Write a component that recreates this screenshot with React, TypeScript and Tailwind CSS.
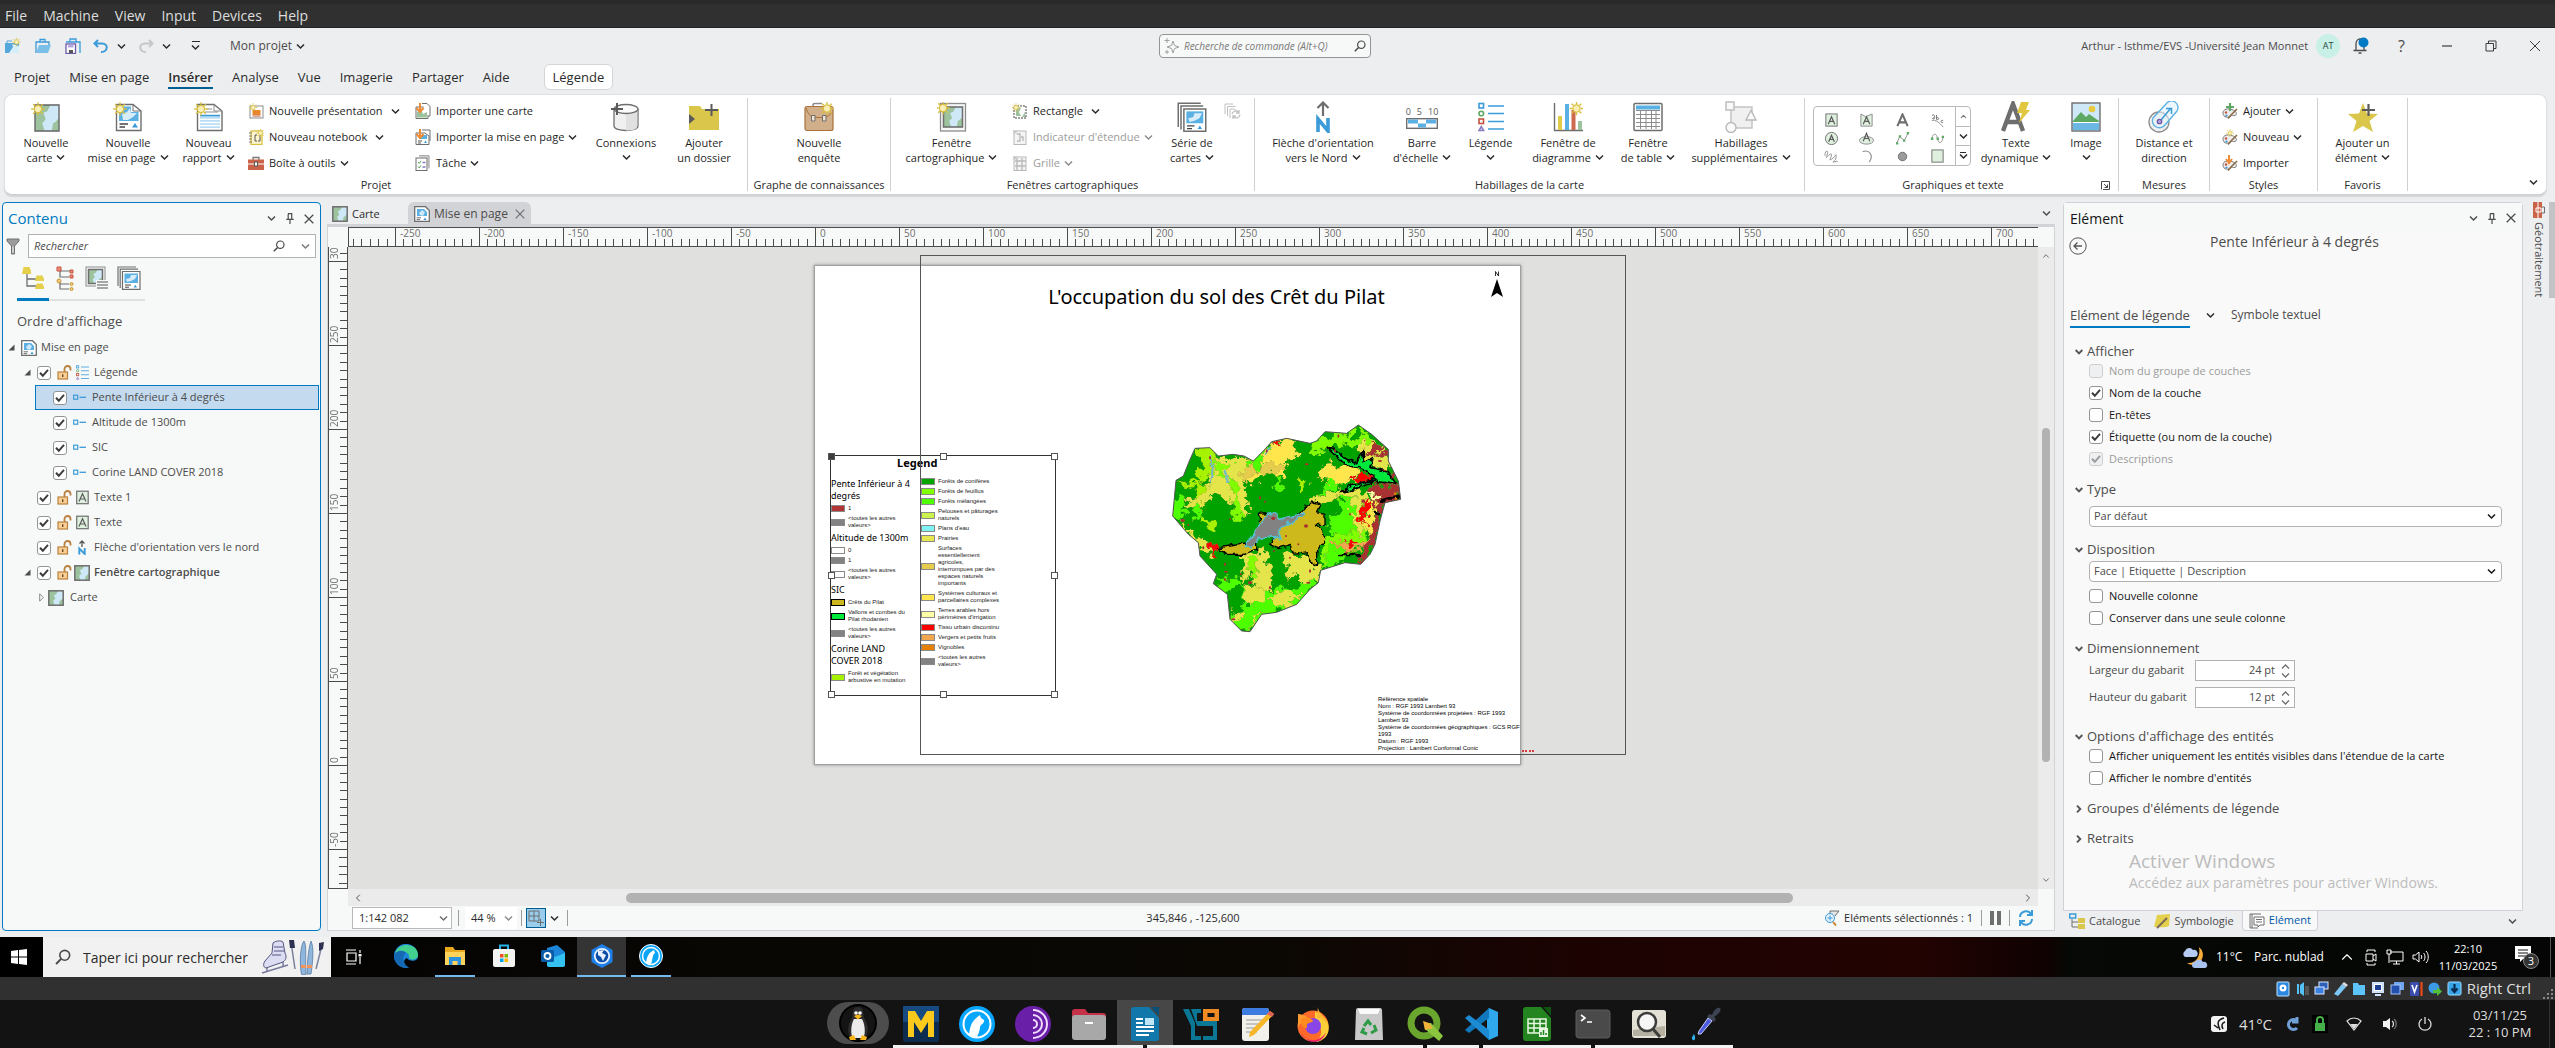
import React from 'react';
import { ChevronDown, ChevronUp, ChevronLeft, ChevronRight } from 'lucide-react';

/* ---------- shared drawing helpers ---------- */

const Svg = ({ w, h, vb, children, className = '' }: { w: number; h: number; vb?: string; children: React.ReactNode; className?: string }) => (
  <svg width={w} height={h} viewBox={vb ?? `0 0 ${w} ${h}`} fill="none" className={`shrink-0 ${className}`} aria-hidden="true">
    {children}
  </svg>
);

const Chev = ({ className = 'text-[#2b2b2b]' }: { className?: string }) => (
  <Svg w={9} h={7} className={className}>
    <path d="M1 1.5 4.5 5 8 1.5" stroke="currentColor" strokeWidth="1.5" />
  </Svg>
);

const Sun = ({ x, y, r = 4 }: { x: number; y: number; r?: number }) => (
  <g transform={`translate(${x} ${y})`}>
    {[0, 45, 90, 135, 180, 225, 270, 315].map((a) => (
      <path key={a} d={`M0 ${-r - 0.6}V${-r * 1.9}`} stroke="#d9bf3f" strokeWidth={r * 0.38} transform={`rotate(${a})`} />
    ))}
    <circle r={r} fill="#f8efb8" stroke="#d9bf3f" strokeWidth={r * 0.32} />
  </g>
);

const MapArt = ({ x, y, w, h }: { x: number; y: number; w: number; h: number }) => (
  <g transform={`translate(${x} ${y}) scale(${w / 20} ${h / 20})`}>
    <rect width="20" height="20" fill="#cfe8f7" />
    <path d="M0 0H13L10 5 7 6 9 11 6 14 8 20H0ZM20 10V20H14L15 14 17 13Z" fill="#9cc39d" />
    <rect width="20" height="20" stroke="#6e6e6e" strokeWidth={30 / w} fill="none" />
  </g>
);

const MapIcon = ({ s = 16 }: { s?: number }) => (
  <Svg w={s} h={s} vb="0 0 16 16">
    <MapArt x={0.8} y={0.8} w={14.4} h={14.4} />
  </Svg>
);

const PageIcon = ({ s = 16 }: { s?: number }) => (
  <Svg w={s} h={s} vb="0 0 16 16">
    <path d="M.7.7H11.5L15.3 4.5V15.3H.7Z" fill="#fff" stroke="#6e6e6e" strokeWidth="1.3" />
    <path d="M3 3H10L13 6V10H3Z" fill="#5aafe3" />
    <path d="M6 9 5 7 8 4 11 6 9 10Z" fill="#cfe8f7" />
    <path d="M2.6 11.8H7M2.6 13.6H6" stroke="#6e6e6e" />
    <path d="M9.5 14 11 11.6 12.5 14Z" fill="#3b9bd8" />
  </Svg>
);

const PagesStack = ({ s = 24 }: { s?: number }) => (
  <Svg w={s} h={s} vb="0 0 24 24">
    <path d="M1 20V1H19M3.2 22V3.2H21" stroke="#6e6e6e" strokeWidth="1.2" />
    <path d="M5.5 5.5H23V23.4H5.5Z" fill="#fff" stroke="#6e6e6e" strokeWidth="1.2" />
    <rect x="7.5" y="7.5" width="13.5" height="9.5" fill="#5aafe3" />
    <path d="M10 16 9 13 13 12 14 9 20 9 18 13 14 15Z" fill="#d8edfa" />
    <path d="M8 19H14M8 21.2H12" stroke="#444" />
    <path d="M16.5 21.5 18.3 18.7 20 21.5Z" fill="#3b9bd8" />
  </Svg>
);

const Funnel = () => (
  <Svg w={14} h={17}>
    <path d="M1 1H13V3L8.5 8V16H5.5V8L1 3Z" fill="#9c9c9c" stroke="#6e6e6e" />
    <path d="M6.5 8.5H7.5V15H6.5Z" fill="#fff" />
  </Svg>
);

const Lens = ({ s = 12, className = 'text-[#4c4c4c]' }: { s?: number; className?: string }) => (
  <Svg w={s} h={s} vb="0 0 12 12" className={className}>
    <circle cx="7.3" cy="4.7" r="3.7" stroke="currentColor" strokeWidth="1.2" />
    <path d="M4.6 7.4.8 11.3" stroke="currentColor" strokeWidth="1.5" />
  </Svg>
);

const Pin = () => (
  <Svg w={8} h={11}>
    <path d="M2 .7H6.3M2.2.7V6M5.7.7V6M.3 6.4H7.7M4 6.4V11" stroke="#4c4c4c" strokeWidth="1.2" />
  </Svg>
);

const LegendIcon = ({ w = 13, h = 15 }: { w?: number; h?: number }) => (
  <Svg w={w} h={h} vb="0 0 26 30">
    <rect x="1" y="1.5" width="4.5" height="4.5" stroke="#3b9bd8" strokeWidth="1.6" />
    <circle cx="3.3" cy="11.5" r="2.3" stroke="#5da862" strokeWidth="1.6" />
    <rect x="1" y="17" width="4.5" height="4.5" stroke="#c4523f" strokeWidth="1.6" />
    <path d="M1 28.5 3.3 24.5 5.6 28.5Z" stroke="#8c7cc0" strokeWidth="1.6" />
    <path d="M10 4H26M10 11.5H26M10 19.5H26M10 27H26" stroke="#3b9bd8" strokeWidth="1.6" />
  </Svg>
);

const LayerItemIcon = () => (
  <Svg w={13} h={7}>
    <rect x=".7" y="1.2" width="4" height="4" stroke="#3b9bd8" strokeWidth="1.2" />
    <path d="M6.5 3.3H13" stroke="#3b9bd8" strokeWidth="1.3" />
  </Svg>
);

const LockIcon = () => (
  <Svg w={15} h={15}>
    <path d="M7.5 7V4a3 3 0 0 1 6 0V5.500" stroke="#b9803f" strokeWidth="1.8" />
    <rect x="1" y="7" width="9.5" height="7" fill="#f9cf96" stroke="#b9803f" strokeWidth="1.2" />
    <path d="M5.7 9.2V12" stroke="#6b4520" strokeWidth="1.4" />
  </Svg>
);

const TextBoxIcon = () => (
  <Svg w={13} h={15}>
    <rect x=".7" y="1.2" width="11.5" height="12.5" fill="#dff0df" stroke="#6e6e6e" strokeWidth="1.2" />
    <path d="M3 11.5 6.5 3.8 10 11.5M4.3 9H8.7" stroke="#5a5a5a" strokeWidth="1.2" />
  </Svg>
);

const NorthIcon = () => (
  <Svg w={8} h={15}>
    <path d="M4 7V1M1.5 3.5 4 1 6.5 3.5" stroke="#555" strokeWidth="1.3" />
    <path d="M1.3 14.5V8.5L6.7 14V8" stroke="#3b9bd8" strokeWidth="1.9" />
  </Svg>
);

/* ---------- form parts ---------- */

const Check = ({ id, on = false, disabled = false }: { id: string; on?: boolean; disabled?: boolean }) => (
  <span className="relative inline-flex size-3.5 shrink-0">
    <input
      id={id}
      type="checkbox"
      defaultChecked={on}
      disabled={disabled}
      className="peer size-3.5 appearance-none rounded-[3px] border border-[#949494] bg-white disabled:border-[#cfcfcf] disabled:bg-[#eeeff0]"
    />
    <svg viewBox="0 0 14 14" className="pointer-events-none absolute inset-0 hidden size-3.5 text-[#3c3c3c] peer-checked:block peer-disabled:text-[#9c9c9c]" fill="none" aria-hidden="true">
      <path d="M3 6.8 5.8 9.8 11 3.8" stroke="currentColor" strokeWidth="2" />
    </svg>
  </span>
);

/* ---------- ribbon ---------- */

const Big = ({ icon, a, b, chev = false, w }: { icon: React.ReactNode; a: string; b?: string; chev?: boolean; w: string }) => (
  <button className={`flex shrink-0 flex-col items-center pt-[3px] text-[11px] leading-[15px] whitespace-nowrap text-[#1f1f1f] ${w}`}>
    <span className="mb-0.5 flex h-8 items-center">{icon}</span>
    <span>{a}</span>
    <span className="flex h-[15px] items-center gap-1">
      {b}
      {chev && <Chev />}
    </span>
  </button>
);

const Small = ({ icon, t, chev = false, wide = false, dim = false }: { icon: React.ReactNode; t: string; chev?: boolean; wide?: boolean; dim?: boolean }) => (
  <button className={`flex h-[26px] items-center text-[11px] whitespace-nowrap ${dim ? 'text-[#9c9c9c]' : 'text-[#1f1f1f]'}`}>
    <span className="flex w-[21px] items-center">{icon}</span>
    {t}
    {chev && <Chev className={`${wide ? 'ml-2' : 'ml-1'} ${dim ? 'text-[#8c8c8c]' : 'text-[#2b2b2b]'}`} />}
  </button>
);

const Group = ({ label, w, children, launcher = false }: { label: string; w: string; children: React.ReactNode; launcher?: boolean }) => (
  <section className={`my-[3px] flex shrink-0 flex-col border-r border-[#d0d0d0] ${w}`}>
    <div className="flex h-[81px]">{children}</div>
    <div className="flex h-3 items-center text-[11px] leading-3 text-[#2b2b2b]">
      <h3 className="flex-1 text-center whitespace-nowrap">{label}</h3>
      {launcher && (
        <button aria-label="Options" className="mr-2">
          <Svg w={9} h={9}>
            <path d="M.5 8.5V.5H8.5V8.5H2M3 3 6.5 6.5M6.5 3.5V6.5H3.5" stroke="#4c4c4c" />
          </Svg>
        </button>
      )}
    </div>
  </section>
);

const NewMap = () => (
  <Svg w={30} h={30}>
    <MapArt x={4} y={3} w={24} h={26} />
    <Sun x={7} y={7} r={3.6} />
  </Svg>
);
const NewLayout = () => (
  <Svg w={30} h={30}>
    <path d="M3.5 2.5H20L28 9V28.5H3.5Z" fill="#fff" stroke="#6e6e6e" strokeWidth="1.4" />
    <path d="M6 4.5H18V10H25.5V19H6Z" fill="#5aafe3" />
    <path d="M10 18 9 12 14 10 17 6 18 11 24 11 20 15 15 18Z" fill="#d8edfa" />
    <path d="M20 2.5V9H28" stroke="#6e6e6e" />
    <path d="M6.5 22H15M6.5 25H12" stroke="#444" strokeWidth="1.3" />
    <path d="M19 25.5 22 21 25 25.5Z" fill="#3b9bd8" />
    <Sun x={7} y={7} r={3.6} />
  </Svg>
);
const NewReport = () => (
  <Svg w={30} h={30}>
    <path d="M3.5 2.5H20L28 9V28.5H3.5Z" fill="#fff" stroke="#6e6e6e" strokeWidth="1.4" />
    <path d="M20 2.5V9H28M13 7H18M11 10H24" stroke="#8c8c8c" />
    <path d="M6 13.5H26V26H6Z" fill="#b9def5" />
    <path d="M6 13.5H26" stroke="#3b9bd8" strokeWidth="1.6" />
    <path d="M6 17.3H26M6 20.5H26M6 23.7H26" stroke="#fff" strokeWidth="1.3" />
    <Sun x={7} y={7} r={3.6} />
  </Svg>
);
const Cylinder = () => (
  <Svg w={30} h={30}>
    <path d="M3 7V24C3 30 27 30 27 24V7" fill="#f0f0f0" stroke="#6e6e6e" strokeWidth="1.3" />
    <path d="M15 8H26.3V24C26 28 20 28.5 15 28.5Z" fill="#e0e0e0" />
    <ellipse cx="15" cy="7" rx="12" ry="4.5" fill="#fafafa" stroke="#6e6e6e" strokeWidth="1.3" />
    <path d="M0 7H12M6 1V13" stroke="#5a5a5a" strokeWidth="2" />
  </Svg>
);
const FolderAdd = () => (
  <Svg w={32} h={30}>
    <path d="M1 4H12L14 7H31V28H1Z" fill="#d9c64a" />
    <path d="M1 12 7 17 1 22Z" fill="#5a5a5a" />
    <path d="M17 8H30M23.5 2V14" stroke="#5a5a5a" strokeWidth="2" />
  </Svg>
);
const Briefcase = () => (
  <Svg w={30} h={30}>
    <path d="M9 5V3C9 2 10 1.5 11 1.5H18" stroke="#8c8c8c" strokeWidth="1.5" />
    <rect x="1" y="4.5" width="28" height="24" rx="2" fill="#d1af8b" stroke="#a9713b" strokeWidth="1.2" />
    <path d="M2 6C5 15 8 15 14 15.5S25 15 28 10" stroke="#a9713b" />
    <path d="M7.5 13.5H11V19H7.5ZM18.5 13.5H22V19H18.5Z" fill="#f0e3d4" stroke="#6e6e6e" />
    <Sun x={23} y={6.5} r={3.6} />
  </Svg>
);
const MapFrame = () => (
  <Svg w={30} h={30}>
    <rect x="3.5" y="1.5" width="25" height="27.5" fill="#f7f7f7" stroke="#8c8c8c" strokeWidth="1.3" />
    <MapArt x={6.5} y={5} w={19} h={20} />
    <Sun x={6} y={6} r={3.6} />
  </Svg>
);
const NorthBig = () => (
  <Svg w={16} h={32}>
    <path d="M8 15V2M2.5 7 8 1.5 13.5 7" stroke="#6e6e6e" strokeWidth="2.2" />
    <path d="M3 31V18L13 30V17" stroke="#3b9bd8" strokeWidth="3.6" />
  </Svg>
);
const ScaleBar = () => (
  <span className="flex flex-col items-center text-[9px] leading-3 text-[#5a5a5a]">
    <span className="flex gap-1.5"><span>0</span><span>5</span><span>10</span></span>
    <Svg w={32} h={11}>
      <rect x=".7" y=".7" width="30.6" height="9.6" fill="#fff" stroke="#6e6e6e" strokeWidth="1.4" />
      <path d="M2 1.4H12V5.5H2ZM20 1.4H30V5.5H20ZM12 5.5H20V9.6H12Z" fill="#5aafe3" />
    </Svg>
  </span>
);
const ChartFrame = () => (
  <Svg w={30} h={30}>
    <path d="M1.5 1V28.5H30" stroke="#6e6e6e" strokeWidth="1.4" />
    <path d="M5 14H9V28H5Z" fill="#e0cc4a" />
    <path d="M12 2H16V28H12Z" fill="#5aafe3" />
    <path d="M18.5 8H22.5V28H18.5Z" fill="#cb6a4f" />
    <path d="M25 19H29V28H25Z" fill="#9cc39d" />
    <Sun x={23.5} y={6.5} r={3.6} />
  </Svg>
);
const TableFrame = () => (
  <Svg w={30} h={30}>
    <rect x="1" y="1.5" width="28" height="27" rx="1" fill="#fff" stroke="#6e6e6e" strokeWidth="1.5" />
    <rect x="3" y="3.5" width="24" height="4" fill="#5aafe3" />
    <path d="M3 8.5H27M3 12.5H27M3 16.5H27M3 20.5H27M3 24.5H27M7.5 8V27M13 8V27M18.5 8V27M23 8V27" stroke="#8c8c8c" />
  </Svg>
);
const Surrounds = () => (
  <Svg w={32} h={32}>
    <rect x="6" y="6" width="21" height="21" fill="#f0f0f0" stroke="#c0c0c0" strokeWidth="1.4" />
    <rect x="1" y="1" width="8" height="8" fill="#fafafa" stroke="#b9b9b9" strokeWidth="1.4" />
    <path d="M21 19 26 9.5 31 19Z" fill="#fafafa" stroke="#b9b9b9" strokeWidth="1.4" />
    <circle cx="6" cy="26.5" r="5" fill="#fafafa" stroke="#b9b9b9" strokeWidth="1.4" />
  </Svg>
);
const DynText = () => (
  <Svg w={30} h={32}>
    <path d="M2 30 12 3 22 30M6 21H18" stroke="#6e6e6e" strokeWidth="4.4" />
    <path d="M20 1H28L25 9H29L18 22 21 12H16Z" fill="#e0c73f" />
  </Svg>
);
const Picture = () => (
  <Svg w={30} h={30}>
    <rect x="1" y="1" width="28" height="28" fill="#cfe8f7" stroke="#6e6e6e" strokeWidth="1.4" />
    <path d="M2 19 10 10 15 15 18 12 28 19V20H2Z" fill="#5da862" />
    <circle cx="21" cy="7" r="3.3" fill="#e8c93f" />
    <path d="M2 20H28V28H2Z" fill="#6db7e4" />
    <path d="M2 20.5H28" stroke="#fff" />
  </Svg>
);
const Distance = () => (
  <Svg w={32} h={32}>
    <circle cx="11" cy="21" r="10" fill="#f0f0f0" stroke="#8c8c8c" strokeWidth="1.3" />
    <path d="M5 17 18 3A6.500 6.500 0 0 1 29 10L17 24A7 7 0 0 1 5 17Z" fill="#e3f1fa" fillOpacity=".6" stroke="#5aafe3" strokeWidth="1.3" />
    <path d="M13 19 23 7M18 7.5H23.5V13" stroke="#3b9bd8" strokeWidth="1.5" />
    <circle cx="11.5" cy="20.5" r="2.2" fill="#b6a6df" stroke="#6f5aa8" strokeWidth="1.3" />
  </Svg>
);
const StarAdd = () => (
  <Svg w={32} h={32}>
    <path d="M16 2 20 12.5 31 13 22.5 20 26 31 16 25 6 31 9.5 20 1 13 12 12.5Z" fill="#d9c64a" />
    <path d="M15 9H28M21.5 3V15" stroke="#5a5a5a" strokeWidth="2.2" />
  </Svg>
);
const SmallDoc = ({ kind }: { kind: 'pres' | 'note' | 'box' | 'impMap' | 'impPage' | 'task' }) => (
  <Svg w={16} h={16}>
    {kind === 'pres' && (<><rect x="2" y="3" width="13" height="12" fill="#fff" stroke="#8c8c8c" /><path d="M4.5 7H12.5V12H4.5Z" fill="#e8862e" /><path d="M4.5 13H12.5" stroke="#c4523f" /><Sun x={5} y={4.5} r={2.2} /></>)}
    {kind === 'note' && (<><rect x="3" y="2" width="11" height="13.5" fill="#fdf6cf" stroke="#d9bf3f" strokeWidth="1.3" /><path d="M1 4H4M1 7H4M1 10H4M1 13H4" stroke="#777" /><path d="M9 6H7V12H9M10 12H12V6" stroke="#555" /><Sun x={12.5} y={4} r={2.2} /></>)}
    {kind === 'box' && (<><path d="M5 5V2.5H11V5" stroke="#7a7a7a" strokeWidth="1.3" /><path d="M0 4.5H16V15H0Z" fill="#c9644b" /><path d="M0 9H16" stroke="#fff" /><rect x="6.5" y="7" width="3" height="4" fill="#fff" stroke="#5a5a5a" /></>)}
    {kind === 'impMap' && (<><path d="M1 4H13V15.5H1Z" fill="#fff" stroke="#6e6e6e" /><path d="M7 .5H12L15 3.5V13H13" fill="#fff" stroke="#6e6e6e" /><path d="M2 9 6 7 8 11 12 9V14.5H2Z" fill="#9cc39d" /><path d="M5 0V7M1.5 5 5 9 8.5 5" stroke="#ed8b36" strokeWidth="2" /></>)}
    {kind === 'impPage' && (<><path d="M1 4H10L14 7V15.5H1Z" fill="#fff" stroke="#6e6e6e" /><path d="M7 1H15V12" stroke="#6e6e6e" /><path d="M7 6H12V10H4V8Z" fill="#5aafe3" /><path d="M3 12H7M3 14H6" stroke="#555" /><path d="M9 14 10.5 11.5 12 14Z" fill="#3b9bd8" /><path d="M5 0V7M1.5 5 5 9 8.5 5" stroke="#ed8b36" strokeWidth="2" /></>)}
    {kind === 'task' && (<><path d="M4 .8H14V13.5" fill="#eaeaea" stroke="#8c8c8c" /><rect x="1" y="3" width="11" height="12.5" fill="#fff" stroke="#6e6e6e" /><path d="M3 7 4.3 8.5 6 5.8M3 11.5 4.3 13 6 10.3" stroke="#5da862" /><path d="M7.5 7.5H10.5M7.5 12H10.5" stroke="#8c7cc0" strokeWidth="1.5" /></>)}
  </Svg>
);
const StyleIcon = ({ kind }: { kind: 'add' | 'new' | 'imp' }) => (
  <Svg w={16} h={16}>
    <path d="M1 10C1 6 6 5 10 6.5 14 8 16 11 13 12.5 11 13 10 11.5 9 13 7 15 1 15 1 10Z" fill="#ededed" stroke="#7a7a7a" />
    <circle cx="4" cy="9.5" r="1.2" fill="#c4523f" /><circle cx="4.5" cy="12.5" r="1.1" fill="#3b9bd8" />
    <path d="M15 6 9 12 6 15.5" stroke="#8c6b4a" strokeWidth="1.6" />
    {kind === 'add' && <path d="M8 0V8M4 4H12" stroke="#5da862" strokeWidth="2.2" />}
    {kind === 'new' && <Sun x={8} y={4} r={2} />}
    {kind === 'imp' && <path d="M7 0V6M4 4 7 8 10 4" stroke="#ed8b36" strokeWidth="2" />}
  </Svg>
);
const DimFrame = ({ grid = false }: { grid?: boolean }) => (
  <Svg w={15} h={16}>
    <rect x="2" y="2" width="12" height="13.5" fill="#f4f4f4" stroke="#b9b9b9" />
    <path d={grid ? 'M5 3V15M10 3V15M3 6H14M3 11H14' : 'M5 5H8V12H5M9 8H11V12'} stroke="#b9b9b9" strokeWidth="1.3" />
    <path d="M1 3H5M3 1V5M1 1 5 5M5 1 1 5" stroke="#c4c4c4" strokeWidth=".7" />
  </Svg>
);

const GALLERY: React.ReactNode[] = [
  <><rect x="2" y="1" width="12" height="13" fill="#dff0df" stroke="#6e6e6e" /><path d="M4.5 12 8 4 11.5 12M5.8 9H10.2" stroke="#5a5a5a" strokeWidth="1.3" /></>,
  <><path d="M2 1 7 4 14 1V14H2Z" fill="#dff0df" stroke="#8c8c8c" /><path d="M4.5 12 8 4 11.5 12M5.8 9H10.2" stroke="#5a5a5a" strokeWidth="1.3" /></>,
  <path d="M2.5 14 8 1.5 13.5 14M4.5 10H11.5" stroke="#6e6e6e" strokeWidth="2.2" />,
  <><path d="M2 3C4 1 5 2 5 5M5 5C2 5 2 7 5 6M7 2V7C10 8 10 4 7 5M14 8C11 7 11 11 14 10" stroke="#6e6e6e" /><path d="M2 8C6 7 10 10 14 15" stroke="#8c8c8c" /></>,
  <><circle cx="8" cy="8" r="6.5" fill="#dff0df" stroke="#6e6e6e" /><path d="M5 11.5 8 4.5 11 11.5M6 9H10" stroke="#5a5a5a" strokeWidth="1.3" /></>,
  <><ellipse cx="8" cy="10" rx="7.5" ry="4" fill="#dff0df" stroke="#8c8c8c" /><path d="M4.5 11 8 2.5 11.5 11M6 8H10" stroke="#5a5a5a" strokeWidth="1.3" /></>,
  <><path d="M2 13 5 6 10 10 14 2" stroke="#8c8c8c" /><path d="M1 12H3.5V14.5H1ZM4 4.5H6.5V7H4ZM8.5 9H11V11.5H8.5ZM12.5 1H15V3.5H12.5Z" fill="#5da862" /></>,
  <><path d="M2 8C3 2 7 2 8 8S13 14 14 6" stroke="#8c8c8c" /><path d="M1 7H3.5V9.5H1ZM7 7H9.5V9.5H7ZM12.5 5H15V7.5H12.5Z" fill="#5da862" /></>,
  <path d="M1 7C1 0 6 1 3 7S8 2 8 6 4 13 8 11 13 3 13 8 8 14 10 14 14 12 15 14" stroke="#8c8c8c" />,
  <path d="M4 3C11 0 16 7 11 14" stroke="#8c8c8c" strokeWidth="1.2" />,
  <circle cx="8" cy="8" r="4.5" fill="#9c9c9c" stroke="#6e6e6e" />,
  <rect x="2" y="1" width="12" height="13" fill="#dff0df" stroke="#6e6e6e" />,
];

const Ribbon = () => (
  <div className="mr-2 ml-1 flex h-[101px] overflow-hidden rounded-lg border border-[#dfe0e2] border-b-[#cfd0d2] bg-white shadow-[0_2px_1px_#d4d5d7]">
    <Group label="Projet" w="w-[743px]">
      <Big w="w-[82px]" icon={<NewMap />} a="Nouvelle" b="carte" chev />
      <Big w="w-[82px]" icon={<NewLayout />} a="Nouvelle" b="mise en page" chev />
      <Big w="w-[79px]" icon={<NewReport />} a="Nouveau" b="rapport" chev />
      <div className="flex w-[167px] flex-col items-start">
        <Small icon={<SmallDoc kind="pres" />} t="Nouvelle présentation" chev wide />
        <Small icon={<SmallDoc kind="note" />} t="Nouveau notebook" chev wide />
        <Small icon={<SmallDoc kind="box" />} t="Boîte à outils" chev />
      </div>
      <div className="flex w-[172px] flex-col items-start">
        <Small icon={<SmallDoc kind="impMap" />} t="Importer une carte" />
        <Small icon={<SmallDoc kind="impPage" />} t="Importer la mise en page" chev />
        <Small icon={<SmallDoc kind="task" />} t="Tâche" chev />
      </div>
      <Big w="w-[78px]" icon={<Cylinder />} a="Connexions" chev />
      <Big w="w-[78px]" icon={<FolderAdd />} a="Ajouter" b="un dossier" />
    </Group>
    <Group label="Graphe de connaissances" w="w-[143px]">
      <Big w="w-full" icon={<Briefcase />} a="Nouvelle" b="enquête" />
    </Group>
    <Group label="Fenêtres cartographiques" w="w-[364px]">
      <Big w="w-[121px]" icon={<MapFrame />} a="Fenêtre" b="cartographique" chev />
      <div className="flex w-[150px] flex-col items-start">
        <Small
          icon={<Svg w={15} h={16}><rect x="2" y="3" width="12" height="12" fill="#fff" stroke="#444" strokeDasharray="2 1" /><path d="M4 5H9L7 9 9 13H4ZM13 9V14H10Z" fill="#9cc39d" /><Sun x={4} y={4.5} r={2.2} /></Svg>}
          t="Rectangle" chev wide
        />
        <Small icon={<DimFrame />} t="Indicateur d'étendue" chev dim />
        <Small icon={<DimFrame grid />} t="Grille" chev dim />
      </div>
      <Big w="w-[60px]" icon={<PagesStack s={30} />} a="Série de" b="cartes" chev />
      <button aria-label="Actualiser la série" className="mt-[5px] ml-0.5 self-start">
        <Svg w={17} h={16}>
          <path d="M1 11V1H9M3.5 13V3.5H11.5M6 15V6H10L13 8" stroke="#c0c0c0" />
          <path d="M8 11A4 4 0 0 1 15 9.5M16 11.5A4 4 0 0 1 9 13.5M15 7V10H12M9 16V13H12" stroke="#c0c0c0" strokeWidth="1.3" />
        </Svg>
      </button>
    </Group>
    <Group label="Habillages de la carte" w="w-[550px]">
      <Big w="w-[136px]" icon={<NorthBig />} a="Flèche d'orientation" b="vers le Nord" chev />
      <Big w="w-[62px]" icon={<ScaleBar />} a="Barre" b="d'échelle" chev />
      <Big w="w-[75px]" icon={<LegendIcon w={26} h={30} />} a="Légende" chev />
      <Big w="w-[80px]" icon={<ChartFrame />} a="Fenêtre de" b="diagramme" chev />
      <Big w="w-[80px]" icon={<TableFrame />} a="Fenêtre" b="de table" chev />
      <Big w="w-[106px]" icon={<Surrounds />} a="Habillages" b="supplémentaires" chev />
    </Group>
    <Group label="Graphiques et texte" w="w-[314px]" launcher>
      <div className="mt-2 ml-2 flex h-[60px] w-[158px] shrink-0 rounded border border-[#b9b9b9]">
        <div className="grid flex-1 grid-cols-4 place-items-center pt-1">
          {GALLERY.map((g, i) => (
            <button key={i} aria-label={`Forme ${i + 1}`}><Svg w={15} h={15} vb="0 0 16 16">{g}</Svg></button>
          ))}
        </div>
        <div className="flex w-[15px] flex-col border-l border-[#b9b9b9]">
          <button aria-label="Précédent" className="flex flex-1 items-center justify-center border-b border-[#b9b9b9]"><ChevronUp size={9} strokeWidth={3} color="#7a7a7a" /></button>
          <button aria-label="Suivant" className="flex flex-1 items-center justify-center border-b border-[#b9b9b9]"><Chev /></button>
          <button aria-label="Plus" className="flex flex-1 flex-col items-center justify-center"><span className="h-px w-1.5 bg-[#2b2b2b]" /><Chev /></button>
        </div>
      </div>
      <Big w="w-[90px]" icon={<DynText />} a="Texte" b="dynamique" chev />
      <Big w="w-[50px]" icon={<Picture />} a="Image" chev />
    </Group>
    <Group label="Mesures" w="w-[91px]">
      <Big w="w-full" icon={<Distance />} a="Distance et" b="direction" />
    </Group>
    <Group label="Styles" w="w-[108px]">
      <div className="ml-3 flex flex-col items-start">
        <Small icon={<StyleIcon kind="add" />} t="Ajouter" chev />
        <Small icon={<StyleIcon kind="new" />} t="Nouveau" chev />
        <Small icon={<StyleIcon kind="imp" />} t="Importer" />
      </div>
    </Group>
    <Group label="Favoris" w="w-[90px]">
      <Big w="w-full" icon={<StarAdd />} a="Ajouter un" b="élément" chev />
    </Group>
    <button aria-label="Réduire le ruban" className="mr-2 mb-2 ml-auto self-end"><Chev /></button>
  </div>
);

/* ---------- top bars ---------- */

const TitleBar = () => (
  <header className="flex h-9 items-center">
    <div className="flex flex-[1152_1_0%] items-center">
      <div className="flex items-center gap-3.5 pl-[5px]">
        <button aria-label="Nouveau projet"><Svg w={16} h={16}><path d="M0 5H14V15H0Z" fill="#56a7db" /><path d="M4 15 8 9 7 6 14 8V15Z" fill="#d8edfa" /><path d="M2 5V3H7" stroke="#56a7db" /><Sun x={11.5} y={4} r={2.2} /></Svg></button>
        <button aria-label="Ouvrir"><Svg w={16} h={16}><path d="M1 15V4H14V7" stroke="#3b9bd8" strokeWidth="1.3" /><path d="M5 4V1.5H10V4" stroke="#3b9bd8" strokeWidth="1.3" /><path d="M1 15 4 7H16L13 15Z" fill="#7cc0ea" /></Svg></button>
        <button aria-label="Enregistrer"><Svg w={16} h={16}><path d="M1 4H15V15M5 3.5V1H11V3.5" stroke="#3b9bd8" strokeWidth="1.3" /><rect x="1" y="6" width="9.5" height="9.5" fill="#fff" stroke="#6f5aa8" strokeWidth="1.3" /><path d="M3 6.5H8.5V9.5H3Z" fill="#b6a6df" /><path d="M4 12H8V15H4Z" fill="#555" /></Svg></button>
      </div>
      <button aria-label="Annuler" className="ml-3"><Svg w={16} h={14}><path d="M5 1 1.5 4.5 5 8M2 4.5H9C16 4.5 15 13 8 13" stroke="#3b9bd8" strokeWidth="2" /></Svg></button>
      <button aria-label="Historique d'annulation" className="ml-2"><Chev /></button>
      <button aria-label="Rétablir" className="ml-3"><Svg w={16} h={14}><path d="M11 1 14.5 4.5 11 8M14 4.5H7C0 4.5 1 13 8 13" stroke="#c4c6c8" strokeWidth="2" /></Svg></button>
      <button aria-label="Historique de rétablissement" className="ml-2"><Chev /></button>
      <button aria-label="Personnaliser" className="ml-5 flex flex-col items-center gap-0.5"><span className="h-px w-2 bg-[#2b2b2b]" /><Chev /></button>
      <button className="ml-[30px] flex items-center gap-1 text-[12px] text-[#4c4c4c]">Mon projet <Chev /></button>
    </div>
    <label className="flex h-6 w-[212px] items-center gap-1 rounded border border-[#949494] bg-[#f7f8f8] px-1">
      <Svg w={16} h={16}><path d="M9 3 10.5 7.5 15 9 10.5 10.5 9 15 7.5 10.5 3 9 7.5 7.5ZM3 0V5M.5 2.5H5.5M3 12V16M1 14H5" stroke="#a0a0a0" /></Svg>
      <input aria-label="Recherche de commande" placeholder="Recherche de commande (Alt+Q)" className="w-0 flex-1 bg-transparent text-[10px] italic outline-none placeholder:text-[#7a7a7a]" />
      <Lens />
    </label>
    <div className="flex flex-[1177_1_0%] items-center justify-end text-[11px] text-[#4c4c4c]">
      <span>Arthur - Isthme/EVS -Université Jean Monnet</span>
      <span className="ml-2 flex size-6 items-center justify-center rounded-full bg-[#c9f0e6] text-[9px] text-[#1f4a40]">AT</span>
      <button aria-label="Notifications" className="ml-3"><Svg w={18} h={18}><path d="M4 13V7A4 5 0 0 1 12 7V13M1.5 13.5H14.5M6.5 16H9.5" stroke="#4c4c4c" strokeWidth="1.3" /><circle cx="11.5" cy="5.5" r="5" fill="#007ac2" /></Svg></button>
      <button aria-label="Aide" className="ml-7 text-[16px]">?</button>
      <button aria-label="Réduire" className="ml-9"><Svg w={12} h={12}><path d="M1 6H11" stroke="#3c3c3c" strokeWidth="1.2" /></Svg></button>
      <button aria-label="Restaurer" className="ml-8"><Svg w={12} h={12}><path d="M1 3.5H8.5V11H1ZM3.5 3V1H11V8.5H9" stroke="#3c3c3c" /></Svg></button>
      <button aria-label="Fermer" className="mr-3.5 ml-8"><Svg w={12} h={12}><path d="M1 1 11 11M11 1 1 11" stroke="#3c3c3c" /></Svg></button>
    </div>
  </header>
);

const TABS = ['Projet', 'Mise en page', 'Insérer', 'Analyse', 'Vue', 'Imagerie', 'Partager', 'Aide'];

const Tabs = () => (
  <nav className="flex h-[30px] items-start pl-3.5 text-[13px] leading-5 text-[#2b2b2b]">
    <div className="flex gap-[19px] pt-[3px]">
      {TABS.map((t) => (
        <button key={t} className={t === 'Insérer' ? 'border-b-2 border-[#005e95] font-semibold' : 'border-b-2 border-transparent'}>{t}</button>
      ))}
    </div>
    <button className="ml-[34px] h-[26px] rounded-md border border-[#d4d5d7] bg-white px-2">Légende</button>
  </nav>
);

/* ---------- contents pane ---------- */

type Row = { id: string; t: string; lvl: 0 | 1 | 2 | 3; icon: React.ReactNode; open?: boolean; sel?: boolean; bold?: boolean };
const ROWS: Row[] = [
  { id: 'page', t: 'Mise en page', lvl: 0, icon: <PageIcon />, open: true },
  { id: 'leg', t: 'Légende', lvl: 1, icon: <LegendIcon />, open: true },
  { id: 'pente', t: 'Pente Inférieur à 4 degrés', lvl: 2, icon: <LayerItemIcon />, sel: true },
  { id: 'alt', t: 'Altitude de 1300m', lvl: 2, icon: <LayerItemIcon /> },
  { id: 'sic', t: 'SIC', lvl: 2, icon: <LayerItemIcon /> },
  { id: 'clc', t: 'Corine LAND COVER 2018', lvl: 2, icon: <LayerItemIcon /> },
  { id: 'txt1', t: 'Texte 1', lvl: 1, icon: <TextBoxIcon /> },
  { id: 'txt', t: 'Texte', lvl: 1, icon: <TextBoxIcon /> },
  { id: 'nord', t: "Flèche d'orientation vers le nord", lvl: 1, icon: <NorthIcon /> },
  { id: 'frame', t: 'Fenêtre cartographique', lvl: 1, icon: <MapIcon />, open: true, bold: true },
  { id: 'carte', t: 'Carte', lvl: 3, icon: <MapIcon /> },
];

const Triangle = () => <Svg w={7} h={7}><path d="M6.5.5V6.5H.5Z" fill="#4c4c4c" /></Svg>;

const TreeRow = ({ r }: { r: Row }) => {
  if (r.lvl === 0)
    return <li className="flex h-[25px] items-center pl-[5px]"><Triangle /><span className="mr-1 ml-1.5 flex">{r.icon}</span>{r.t}</li>;
  if (r.lvl === 3)
    return (
      <li className="flex h-[25px] items-center pl-9">
        <Svg w={5} h={9}><path d="M.7.8 4.3 4.5.7 8.2Z" stroke="#8c8c8c" /></Svg>
        <span className="mr-1.5 ml-1 flex">{r.icon}</span>{r.t}
      </li>
    );
  if (r.lvl === 2)
    return (
      <li className={`mr-px ml-8 flex h-[25px] items-center border pl-[17px] ${r.sel ? 'border-[#007ac2] bg-[#c4daee]' : 'border-transparent'}`}>
        <Check id={r.id} on />
        <label htmlFor={r.id} className="flex items-center"><span className="flex w-[25px] justify-center">{r.icon}</span>{r.t}</label>
      </li>
    );
  return (
    <li className="flex h-[25px] items-center pl-[21px]">
      <span className="flex w-[13px]">{r.open && <Triangle />}</span>
      <Check id={r.id} on />
      <label htmlFor={r.id} className="flex items-center">
        <span className="ml-1.5 flex"><LockIcon /></span>
        <span className="mr-1 ml-0.5 flex w-4 justify-center">{r.icon}</span>
        <span className={r.bold ? 'font-semibold' : ''}>{r.t}</span>
      </label>
    </li>
  );
};

const PaneButtons = () => (
  <div className="flex items-center gap-2.5">
    <button aria-label="Menu du volet"><Chev className="text-[#4c4c4c]" /></button>
    <button aria-label="Épingler"><Pin /></button>
    <button aria-label="Fermer le volet"><Svg w={10} h={10}><path d="M.7.7 9.3 9.3M9.3.7.7 9.3" stroke="#4c4c4c" strokeWidth="1.3" /></Svg></button>
  </div>
);

const Contents = () => (
  <aside className="ml-0.5 flex w-[319px] shrink-0 flex-col rounded-sm border border-[#007ac2] bg-[#f7f9f8] text-[#4c4c4c]">
    <div className="flex h-[31px] items-center justify-between pr-1.5 pl-[5px]">
      <h2 className="text-[15px] text-[#007ac2]">Contenu</h2>
      <PaneButtons />
    </div>
    <div className="flex items-center gap-2 pr-1 pl-[3px]">
      <Funnel />
      <label className="flex h-6 flex-1 items-center gap-4 border border-[#b2b2b2] bg-white px-[5px]">
        <input aria-label="Rechercher" placeholder="Rechercher" className="w-0 flex-1 bg-transparent text-[11px] italic outline-none placeholder:text-[#4c4c4c]" />
        <Lens /><Chev className="text-[#7a7a7a]" />
      </label>
    </div>
    <div className="mt-2 ml-3.5 flex self-start border-b-2 border-[#e0e0e0] text-center">
      <button aria-label="Par ordre d'affichage" className="-mb-0.5 flex h-[35px] w-8 justify-center border-b-[3px] border-[#007ac2]">
        <Svg w={22} h={24}><path d="M5 8V20H14M5 13H14" stroke="#6e6e6e" strokeWidth="1.3" /><path d="M0 8 1.5 1H7.5L9 5V8ZM13 15 14.5 9.5H20.5L22 13V15ZM13 23 14.5 17.5H20.5L22 21V23Z" fill="#e5d04c" /></Svg>
      </button>
      <button aria-label="Par type d'élément" className="flex w-8 justify-center">
        <Svg w={18} h={26}><path d="M4 5H14M4 5V11H13M4 16V23H13M4 18H13" stroke="#6e6e6e" strokeWidth="1.2" /><path d="M1 1H5V5H1ZM14 4H17V7H14ZM14 9H17V12H14Z" fill="#ef8e7d" stroke="#c4523f" /><circle cx="3" cy="15" r="2" fill="#f2cf7c" stroke="#c9952f" /><circle cx="15.5" cy="18" r="1.5" fill="#f2cf7c" stroke="#c9952f" /><circle cx="15.5" cy="23" r="1.5" fill="#f2cf7c" stroke="#c9952f" /></Svg>
      </button>
      <button aria-label="Par bloc de carte" className="flex w-8 justify-center">
        <Svg w={24} h={24}><rect x="1" y="1" width="19" height="19" fill="#f7f7f7" stroke="#8c8c8c" /><MapArt x={3.5} y={3.5} w={14} h={14} /><path d="M11 14H24V24H11Z" fill="#f7f9f8" /><path d="M12 16H23M12 19H23M12 22H23" stroke="#555" strokeWidth="1.2" /></Svg>
      </button>
      <button aria-label="Par série de cartes" className="flex w-8 justify-center"><PagesStack /></button>
    </div>
    <h3 className="mt-3 ml-3.5 text-[13px] leading-4">Ordre d'affichage</h3>
    <ul className="mt-1.5 text-[11px]">{ROWS.map((r) => <TreeRow key={r.id} r={r} />)}</ul>
  </aside>
);

/* ---------- map view ---------- */

const H_LABELS = [-250, -200, -150, -100, -50, 0, 50, 100, 150, 200, 250, 300, 350, 400, 450, 500, 550, 600, 650, 700];
const V_LABELS = [250, 200, 150, 100, 50, 0, -50];
const TEN = [0, 1, 2, 3, 4, 5, 6, 7, 8, 9];

const HCell = ({ n }: { n?: number }) => (
  <div className="flex w-[84px] shrink-0 flex-col border-l border-[#4c4c4c] text-[10px] leading-[11px]">
    <span className="h-[11px] pl-1">{n}</span>
    <div className="flex h-[7px] grow">{TEN.map((i) => <i key={i} className={i ? 'flex-1 border-l border-[#4c4c4c]' : 'flex-1'} />)}</div>
  </div>
);

const VCell = ({ n }: { n?: number }) => (
  <div className="flex h-[84px] shrink-0 justify-between border-b border-[#4c4c4c] text-[10px] leading-[11px]">
    <span className="rotate-180 pt-0.5 [writing-mode:vertical-rl]">{n}</span>
    <div className="flex w-2 flex-col">{TEN.map((i) => <i key={i} className={i < 9 ? 'flex-1 border-b border-[#4c4c4c]' : 'flex-1'} />)}</div>
  </div>
);

type Leg = { c: string; t: string; b?: string };
const LEG_A: { h: string; items: Leg[] }[] = [
  { h: 'Pente Inférieur à 4 degrés', items: [{ c: '#b23535', t: '1' }, { c: '#828282', t: '<toutes les autres valeurs>' }] },
  { h: 'Altitude de 1300m', items: [{ c: '#ffffff', t: '0' }, { c: '#828282', t: '1' }, { c: '#ffffff', t: '<toutes les autres valeurs>' }] },
  { h: 'SIC', items: [{ c: '#ccb61e', t: 'Crêts du Pilat', b: '#000' }, { c: '#00e83a', t: 'Vallons et combes du Pilat rhodanien', b: '#000' }, { c: '#828282', t: '<toutes les autres valeurs>' }] },
  { h: 'Corine LAND COVER 2018', items: [{ c: '#a6f200', t: 'Forêt et végétation arbustive en mutation' }] },
];
const LEG_B: Leg[] = [
  { c: '#00a600', t: 'Forêts de conifères' },
  { c: '#80ff00', t: 'Forêts de feuillus' },
  { c: '#4dff00', t: 'Forêts mélangées' },
  { c: '#ccf24d', t: 'Pelouses et pâturages naturels' },
  { c: '#80f2f2', t: "Plans d'eau" },
  { c: '#e6e64d', t: 'Prairies' },
  { c: '#e6cc4d', t: 'Surfaces essentiellement agricoles, interrompues par des espaces naturels importants' },
  { c: '#ffe64d', t: 'Systèmes culturaux et parcellaires complexes' },
  { c: '#ffffa8', t: "Terres arables hors périmètres d'irrigation" },
  { c: '#ff0000', t: 'Tissu urbain discontinu' },
  { c: '#f2a64d', t: 'Vergers et petits fruits' },
  { c: '#e68000', t: 'Vignobles' },
  { c: '#828282', t: '<toutes les autres valeurs>' },
];

const LegItem = ({ i, w }: { i: Leg; w: string }) => (
  <li className="mb-[3px] flex items-center gap-[3px]">
    <span className="h-[7px] w-3.5 shrink-0 border" style={{ background: i.c, borderColor: i.b ?? '#8a8a8a' }} />
    <span className={w}>{i.t}</span>
  </li>
);

const HANDLES = [
  '-top-[3px] -left-[3px] bg-[#3c3c3c]', '-top-[3px] left-[109px] bg-white', '-top-[3px] -right-[3px] bg-white',
  'top-[116px] -left-[3px] bg-white', 'top-[116px] -right-[3px] bg-white',
  '-bottom-[3px] -left-[3px] bg-white', '-bottom-[3px] left-[109px] bg-white', '-right-[3px] -bottom-[3px] bg-white',
];

const LegendBox = () => (
  <div className="absolute top-[189px] left-[15px] h-[241px] w-[226px] border border-[#333] font-['Liberation_Sans',sans-serif] text-[6px] leading-[7px] text-[#222]">
    <h4 className="pl-[66px] font-['Noto_Sans',sans-serif] text-[11px] leading-[14px] font-bold text-black">Legend</h4>
    <div className="mt-2 flex gap-2.5">
      <div className="w-20">
        {LEG_A.map((g) => (
          <section key={g.h}>
            <h5 className="mb-[3px] font-['Noto_Sans',sans-serif] text-[9px] leading-3 text-black">{g.h}</h5>
            <ul>{g.items.map((i, k) => <LegItem key={k} i={i} w="w-[60px]" />)}</ul>
          </section>
        ))}
      </div>
      <ul>{LEG_B.map((i) => <LegItem key={i.t} i={i} w={i.t.startsWith('Surfaces') ? 'w-[64px] pr-0.5' : 'w-[64px]'} />)}</ul>
    </div>
    {HANDLES.map((h) => <span key={h} className={`absolute size-[7px] border border-[#555] ${h}`} />)}
  </div>
);

const OUTLINE =
  'M68 345 78 238 100 225 118 180 135 142 180 140 205 165 250 160 282 165 310 180 340 150 365 122 410 112 480 127 500 120 525 92 590 97 625 72 665 100 715 145 715 180 745 240 752 295 705 305 690 360 675 430 660 460 632 490 585 485 512 508 505 545 480 565 440 610 380 634 335 640 300 692 275 690 240 655 232 580 190 548 200 520 150 465 145 425 115 400Z';

const LandCover = () => (
  <svg viewBox="0 0 840 750" className="absolute top-[135px] left-[335px] h-[250px] w-[280px]" fill="none" aria-label="Occupation du sol">
    <defs>
      <clipPath id="massif"><path d={OUTLINE} /></clipPath>
      <filter id="edges" x="0" y="0" width="100%" height="100%">
        <feTurbulence type="fractalNoise" baseFrequency="0.04" numOctaves="4" seed="4" />
        <feDisplacementMap in="SourceGraphic" scale="55" xChannelSelector="R" yChannelSelector="G" />
      </filter>
      <filter id="edgesFine" x="0" y="0" width="100%" height="100%">
        <feTurbulence type="fractalNoise" baseFrequency="0.05" numOctaves="2" seed="9" />
        <feDisplacementMap in="SourceGraphic" scale="20" xChannelSelector="R" yChannelSelector="G" />
      </filter>
    </defs>
    <g clipPath="url(#massif)">
      <rect width="840" height="750" fill="#00a200" />
      <g filter="url(#edges)" stroke="#7a8a3a" strokeOpacity=".6" strokeWidth="2">
        <path d="M60 290 105 290 100 350 60 355Z" fill="#4dff00" />
        <path d="M100 300 150 290 175 240 195 260 160 320 130 320Z" fill="#e4e44c" />
        <path d="M80 250 130 240 170 260 150 300 130 260Z" fill="#a6f200" />
        <path d="M130 140 200 130 190 200 160 250 135 240 165 180Z" fill="#a6f200" />
        <path d="M195 165 310 170 320 220 280 250 300 340 265 350 240 300 190 280 175 230Z" fill="#e4e44c" />
        <path d="M235 230 255 235 270 330 285 350 245 350 255 290Z" fill="#80ff00" />
        <path d="M190 180 240 190 220 240 190 210Z" fill="#80ff00" />
        <path d="M270 210 310 190 330 200 290 250Z" fill="#e6cc4d" />
        <path d="M300 180 360 120 350 170 320 210Z" fill="#4dff00" />
        <path d="M350 120 430 115 445 170 400 190 415 230 380 225 355 210 310 250 290 240 330 200Z" fill="#ffe64d" />
        <path d="M340 190 420 195 400 210 320 215Z" fill="#e6cc4d" />
        <path d="M380 215 400 265 380 260Z" fill="#4dff00" />
        <path d="M450 235 470 230 465 280 450 275Z" fill="#a6f200" />
        <path d="M500 115 600 90 640 80 700 140 660 170 620 140 560 130 520 150 480 150Z" fill="#80ff00" />
        <path d="M600 95 630 80 640 100 610 115Z" fill="#00a200" />
        <path d="M620 150 670 110 720 150 720 220 680 200 640 190Z" fill="#e4e44c" />
        <path d="M530 190 620 190 620 240 570 250 540 250 500 220Z" fill="#ffe64d" />
        <path d="M530 240 580 245 540 275 500 290 520 260Z" fill="#4dff00" />
        <path d="M480 300 570 265 660 270 640 300 560 290 490 325Z" fill="#e4e44c" />
        <path d="M570 290 640 290 650 400 610 420 540 400 530 350 580 330Z" fill="#4dff00" />
        <path d="M600 300 640 290 630 360 660 380 620 410 610 350Z" fill="#e4e44c" />
        <path d="M525 410 640 390 650 440 560 470 510 510 510 440Z" fill="#80ff00" />
        <path d="M640 290 680 300 670 400 640 380 650 340Z" fill="#ffe64d" />
        <path d="M545 420 600 430 640 420 660 400 650 440 570 460Z" fill="#f2a64d" />
        <path d="M510 490 560 430 600 460 560 495Z" fill="#4dff00" />
        <path d="M130 320 150 310 160 350 130 370Z" fill="#4dff00" />
        <path d="M160 350 210 380 190 390 160 370Z" fill="#a6f200" />
        <path d="M75 350 150 410 200 440 190 460 150 450 130 415Z" fill="#e4e44c" />
        <path d="M270 450 350 450 370 560 330 580 300 520 270 560 280 500Z" fill="#e4e44c" />
        <path d="M290 460 320 470 320 530 300 520Z" fill="#80ff00" />
        <path d="M400 460 490 470 520 530 470 560 440 520 410 540 410 490Z" fill="#e4e44c" />
        <path d="M200 530 280 530 250 560 230 580Z" fill="#4dff00" />
        <path d="M280 560 350 570 420 560 500 540 440 620 340 640 300 700 250 680 240 640 290 620Z" fill="#4dff00" />
        <path d="M290 550 330 560 340 600 290 610ZM350 590 430 560 450 590 380 620ZM240 630 280 640 260 665ZM310 650 330 630 300 690Z" fill="#e4e44c" />
        <path d="M660 250 750 250 755 310 700 310 690 400 640 500 620 480 660 410 680 340 670 290Z" fill="#a83030" />
        <path d="M650 265 690 285 700 305 665 290Z" fill="#ffffa8" />
        <path d="M660 120 700 130 690 150 660 160ZM690 150 725 140 715 180ZM650 210 720 210 740 250 660 240Z" fill="#a83030" />
        <path d="M600 230 670 220 680 240 620 245ZM650 290 670 310 640 350 660 370 620 360ZM590 420 630 430 600 440ZM170 430 190 420 205 465 190 455ZM360 120 385 120 380 135Z" fill="#ff0000" />
        <path d="M740 275 755 275 755 300 735 295Z" fill="#e68000" />
      </g>
      <g filter="url(#edgesFine)">
        <path d="M360 430 390 380 430 350 490 300 510 305 500 335 525 340 525 370 500 370 530 420 500 455 500 490 485 495 470 455 430 460 420 430 385 440Z" fill="#cdb91f" stroke="#000" strokeWidth="4" />
        <path d="M325 340 350 338 355 355 330 365Z" fill="#cdb91f" stroke="#000" strokeWidth="4" />
        <path d="M205 440 240 435 320 425 320 445 280 460 225 460Z" fill="#cdb91f" stroke="#000" strokeWidth="4" />
        <path d="M320 385 350 340 380 335 390 355 465 335 460 345 400 375 385 385 395 415 350 405 325 415 305 440 285 435Z" fill="#828282" stroke="#56bfd0" strokeWidth="5" />
        <path d="M530 135 560 150 590 175 620 185 640 150 640 185 665 170 660 200 710 210 740 250 670 240 610 265 570 275 610 250 680 235 650 210 580 185Z" fill="#00e83a" stroke="#000" strokeWidth="5" />
        <path d="M690 300 745 285 750 295M670 335 695 340M570 462 630 462" stroke="#000" strokeWidth="8" />
        <path d="M180 165 190 210 182 245M222 210 236 245M362 140 345 160" stroke="#74b9c9" strokeWidth="6" />
      </g>
      <g fill="#a83030">
        {[[98, 358], [115, 372], [225, 490], [228, 512], [225, 535], [272, 520], [370, 352], [372, 450], [480, 510], [475, 545], [330, 290], [345, 302], [640, 300], [600, 340], [555, 150], [690, 180], [180, 170], [445, 430], [468, 375], [408, 405], [360, 560], [250, 655], [160, 440], [420, 470], [300, 545], [590, 455], [350, 150], [470, 190], [565, 105], [240, 355]].map(([x, y], i) => (
          <ellipse key={i} cx={x} cy={y} rx={i % 3 ? 3 : 6} ry={i % 2 ? 3 : 5} />
        ))}
      </g>
    </g>
    <path d={OUTLINE} stroke="#555" strokeWidth="3" />
  </svg>
);

const SheetView = () => (
  <div className="relative min-w-0 flex-1 overflow-hidden bg-[#e0e0de]">
    <div className="absolute top-[18px] left-[466px] h-[500px] w-[707px] border border-[#a0a0a0] bg-white shadow-[0_0_3px_#888]">
      <h1 className="absolute top-[17px] right-0 left-[98px] text-center font-['Noto_Sans',sans-serif] text-[20px] leading-7 text-black">L'occupation du sol des Crêt du Pilat</h1>
      <svg viewBox="0 0 14 28" className="absolute top-1 left-[675px] h-7 w-3.5" aria-label="Nord">
        <path d="M5.5 6V1.5L8.5 6V1.5" stroke="#000" strokeWidth=".8" fill="none" />
        <path d="M7 9 13 27 7 23 1 27Z" fill="#000" />
      </svg>
      <LandCover />
      <LegendBox />
      <p className="absolute top-[430px] left-[563px] font-['Liberation_Sans',sans-serif] text-[6px] leading-[7px] whitespace-nowrap text-black">
        Référence spatiale<br />Nom : RGF 1993 Lambert 93<br />Système de coordonnées projetées : RGF 1993<br />Lambert 93<br />
        Système de coordonnées géographiques : GCS RGF<br />1993<br />Datum : RGF 1993<br />Projection : Lambert Conformal Conic
      </p>
    </div>
    <div className="absolute top-2 left-[572px] h-[500px] w-[706px] border border-[#555]" />
    <span className="absolute top-[503px] left-[1174px] w-3 border-b-2 border-dotted border-[#d83a3a]" />
  </div>
);

const MapPane = () => (
  <main className="ml-1.5 flex min-w-0 flex-1 flex-col">
    <div className="flex h-[22px] items-stretch pl-[5px] text-[12px] text-[#2b2b2b]">
      <button className="flex w-[76px] items-center gap-1 pt-0.5 text-[11px]"><MapIcon /> Carte</button>
      <div className="flex w-[123px] items-center gap-1 rounded-t-md bg-[#d2d3d6] px-1.5 pt-0.5">
        <button className="flex items-center gap-1 whitespace-nowrap text-[#4c4c4c]"><PageIcon /> Mise en page</button>
        <button aria-label="Fermer l'onglet" className="ml-auto"><Svg w={10} h={10}><path d="M.7.7 9.3 9.3M9.3.7.7 9.3" stroke="#6e6e6e" strokeWidth="1.2" /></Svg></button>
      </div>
      <button aria-label="Liste des vues" className="mr-1 ml-auto"><Chev className="text-[#4c4c4c]" /></button>
    </div>
    <div className="flex min-h-0 flex-1 flex-col border border-t-[3px] border-[#d2d3d6] bg-[#f7f9f8]">
      <div className="flex h-5 pl-5 text-[#6e6e6e]">
        <div className="mr-4 flex min-w-0 flex-1 overflow-hidden border-y border-l border-[#4c4c4c] bg-[#f7f9f8]">
          <div className="flex w-[46px] shrink-0 justify-end overflow-hidden"><HCell /></div>
          {H_LABELS.map((n) => <HCell key={n} n={n} />)}
        </div>
      </div>
      <div className="flex min-h-0 flex-1">
        <div className="flex w-5 shrink-0 flex-col overflow-hidden border border-t-0 border-[#4c4c4c] text-[#6e6e6e]">
          <div className="flex h-[15px] shrink-0 flex-col justify-end overflow-hidden"><VCell n={300} /></div>
          {V_LABELS.map((n) => <VCell key={n} n={n} />)}
          <div className="h-9 overflow-hidden"><VCell /></div>
        </div>
        <SheetView />
        <div className="flex w-4 flex-col items-center bg-[#ebebeb] py-1">
          <ChevronUp size={10} color="#555" />
          <span className="flex-[167]" />
          <span className="w-2 flex-[334] rounded-full bg-[#b2b2b2]" />
          <span className="flex-[113]" />
          <ChevronDown size={10} color="#555" />
        </div>
      </div>
      <div className="mr-4 ml-5 flex h-[17px] items-center bg-[#ebebeb] px-1">
        <ChevronLeft size={12} color="#555" />
        <span className="flex-[262]" />
        <span className="h-2.5 flex-[1168] rounded-full bg-[#b2b2b2]" />
        <span className="flex-[229]" />
        <ChevronRight size={12} color="#555" />
      </div>
      <div className="flex h-6 items-center pl-6 text-[11px] text-[#2b2b2b]">
        <div className="flex flex-1 items-center">
          <span className="relative flex">
            <select aria-label="Échelle" className="h-[22px] w-[100px] appearance-none border border-[#b9b9b9] bg-white pl-1.5"><option>1:142 082</option></select>
            <Chev className="pointer-events-none absolute top-2 right-1 text-[#6e6e6e]" />
          </span>
          <span className="mx-1.5 h-4 w-px bg-[#9c9c9c]" />
          <span className="relative flex">
            <select aria-label="Zoom" className="h-[22px] w-[52px] appearance-none bg-white pl-1.5"><option>44 %</option></select>
            <Chev className="pointer-events-none absolute top-2 right-1 text-[#8c8c8c]" />
          </span>
          <span className="mr-1 ml-1 h-4 w-px bg-[#9c9c9c]" />
          <button aria-label="Capture" className="flex size-5 items-center justify-center border border-[#005e95] bg-[#9accec]">
            <Svg w={16} h={16}><path d="M1 1H11V11H1ZM6 1V11M1 6H11M12.5 9V16M9 12.5H16" stroke="#6e6e6e" /></Svg>
          </button>
          <button aria-label="Options de capture" className="ml-1"><Chev /></button>
          <span className="ml-2 h-4 w-px bg-[#9c9c9c]" />
        </div>
        <span>345,846 , -125,600</span>
        <div className="flex flex-1 items-center justify-end pr-5">
          <Svg w={16} h={16}><path d="M6 5V1H15L11 6" stroke="#6e6e6e" fill="#e4e4e4" /><circle cx="6" cy="8" r="4.5" fill="#e3f1fa" stroke="#3b9bd8" /><path d="M6 5.5V10.5M3.5 8H8.5" stroke="#3b9bd8" /><path d="M9 12 12 15.5" stroke="#c98d3f" strokeWidth="2" /></Svg>
          <span className="ml-1">Eléments sélectionnés : 1</span>
          <span className="mx-2 h-4 w-px bg-[#9c9c9c]" />
          <button aria-label="Pause" className="flex gap-[3px]"><i className="h-3.5 w-1 bg-[#6e6e6e]" /><i className="h-3.5 w-1 bg-[#6e6e6e]" /></button>
          <span className="mx-2 h-4 w-px bg-[#9c9c9c]" />
          <button aria-label="Actualiser"><Svg w={16} h={16}><path d="M2 7A6 6 0 0 1 13 4M14 9A6 6 0 0 1 3 12M14 0V5H9M2 16V11H7" stroke="#3b9bd8" strokeWidth="2" /></Svg></button>
        </div>
      </div>
    </div>
  </main>
);

/* ---------- element pane ---------- */

const Section = ({ t, open = true, children }: { t: string; open?: boolean; children?: React.ReactNode }) => (
  <section className="mb-3">
    <h3 className="flex h-4 items-center gap-1 pl-[11px] text-[13px]">
      <button aria-label={t} className="flex w-2 justify-center">
        {open ? <Svg w={8} h={6}><path d="M.7 1 4 4.3 7.3 1" stroke="#555" strokeWidth="1.9" /></Svg> : <Svg w={6} h={8}><path d="M1 .7 4.3 4 1 7.3" stroke="#555" strokeWidth="1.9" /></Svg>}
      </button>
      {t}
    </h3>
    {children}
  </section>
);

const Opt = ({ id, t, on, disabled }: { id: string; t: string; on?: boolean; disabled?: boolean }) => (
  <div className={`flex h-[22px] items-center gap-1.5 pl-[25px] ${disabled ? 'text-[#9c9c9c]' : 'text-[#151515]'}`}>
    <Check id={id} on={on} disabled={disabled} />
    <label htmlFor={id}>{t}</label>
  </div>
);

const Drop = ({ label, v }: { label: string; v: string }) => (
  <div className="relative mr-5 ml-[25px]">
    <select aria-label={label} className="block h-[21px] w-full appearance-none rounded-sm border border-[#b2b2b2] bg-white pl-1 text-[#4c4c4c]"><option>{v}</option></select>
    <Chev className="pointer-events-none absolute top-[7px] right-1.5 text-[#151515]" />
  </div>
);

const Spin = ({ id, t, v }: { id: string; t: string; v: string }) => (
  <div className="flex h-[27px] items-center pl-[25px]">
    <label htmlFor={id} className="w-[106px]">{t}</label>
    <span className="flex h-[21px] w-[100px] items-center border border-[#b2b2b2] bg-white pr-1">
      <input id={id} defaultValue={v} className="w-0 flex-1 pr-1.5 text-right outline-none" />
      <span className="flex flex-col">
        <Svg w={9} h={7} className="rotate-180"><path d="M1 1.5 4.5 5 8 1.5" stroke="#6e6e6e" strokeWidth="1.3" /></Svg>
        <Svg w={9} h={7} className="mt-0.5"><path d="M1 1.5 4.5 5 8 1.5" stroke="#6e6e6e" strokeWidth="1.3" /></Svg>
      </span>
    </span>
  </div>
);

const ElementPane = () => (
  <aside className="ml-2 flex w-[460px] shrink-0 flex-col text-[11px] text-[#4c4c4c]">
    <div className="flex min-h-0 flex-1 flex-col rounded-t-sm border border-[#d0d1d6] bg-[#f9f9f9]">
      <div className="flex h-[30px] items-center justify-between bg-[#f7f9f8] px-1.5">
        <h2 className="text-[14px] text-[#151515]">Elément</h2>
        <PaneButtons />
      </div>
      <div className="flex h-[30px] items-start pl-[5px]">
        <button aria-label="Retour" className="mt-1 shrink-0"><Svg w={18} h={18}><circle cx="9" cy="9" r="8.2" stroke="#555" /><path d="M13 9H5M8.5 5.5 5 9 8.5 12.5" stroke="#555" strokeWidth="1.3" /></Svg></button>
        <h3 className="flex-1 pr-5 text-center text-[14px] leading-[18px]">Pente Inférieur à 4 degrés</h3>
      </div>
      <div className="mt-[42px] flex items-start gap-4 pl-1.5">
        <button className="w-[120px] border-b-2 border-[#007ac2] pb-px text-left text-[13px] leading-5 whitespace-nowrap">Elément de légende</button>
        <div className="flex items-center gap-4 text-[12px] leading-5"><button aria-label="Autres options"><Chev /></button><button>Symbole textuel</button></div>
      </div>
      <div className="mt-4 flex flex-col">
        <Section t="Afficher">
          <Opt id="o1" t="Nom du groupe de couches" disabled />
          <Opt id="o2" t="Nom de la couche" on />
          <Opt id="o3" t="En-têtes" />
          <Opt id="o4" t="Étiquette (ou nom de la couche)" on />
          <Opt id="o5" t="Descriptions" on disabled />
        </Section>
        <Section t="Type"><div className="pt-2 pb-[3px]"><Drop label="Type" v="Par défaut" /></div></Section>
        <Section t="Disposition">
          <div className="pt-[3px] pb-[3px]"><Drop label="Disposition" v="Face | Etiquette | Description" /></div>
          <Opt id="o6" t="Nouvelle colonne" />
          <Opt id="o7" t="Conserver dans une seule colonne" />
        </Section>
        <Section t="Dimensionnement">
          <Spin id="s1" t="Largeur du gabarit" v="24 pt" />
          <Spin id="s2" t="Hauteur du gabarit" v="12 pt" />
          <div className="h-1.5" />
        </Section>
        <Section t="Options d'affichage des entités">
          <Opt id="o8" t="Afficher uniquement les entités visibles dans l'étendue de la carte" />
          <Opt id="o9" t="Afficher le nombre d'entités" />
        </Section>
        <Section t="Groupes d'éléments de légende" open={false} />
        <div className="h-0.5" />
        <Section t="Retraits" open={false} />
      </div>
      <div className="-mt-2.5 pl-[65px] text-[#bcbcbc]">
        <p className="text-[19px] leading-6">Activer Windows</p>
        <p className="text-[14px] leading-5">Accédez aux paramètres pour activer Windows.</p>
      </div>
    </div>
    <div className="flex h-5 items-center pl-1.5">
      <button className="flex items-center gap-1"><Svg w={16} h={16}><path d="M3 6V14H9M3 9H9" stroke="#6e6e6e" /><rect x=".7" y="1" width="6" height="4" stroke="#3b9bd8" strokeWidth="1.5" /><path d="M9 5H16V10H9ZM9 11H16V16H9Z" fill="#d9c64a" /></Svg>Catalogue</button>
      <button className="ml-3.5 flex items-center gap-1"><Svg w={16} h={16}><path d="M3 2 16 1 15 13C12 15 4 14 0 14Z" fill="#e5d04c" /><path d="M13 5 7 11 3 15" stroke="#7a6a5a" strokeWidth="2" /></Svg>Symbologie</button>
      <button className="ml-2 flex h-5 items-center gap-1 rounded-b border border-t-0 border-[#d0d1d6] bg-[#f9f9f9] px-1.5 text-[#0058a8]"><Svg w={16} h={16}><path d="M12 1H1V15H9" stroke="#6e6e6e" /><path d="M5 4H15V12H11L9 14V12H5ZM7 6.5H13M7 9H13" stroke="#6e6e6e" fill="#fff" /><path d="M3 1V15" stroke="#6e6e6e" /></Svg>Elément</button>
      <button aria-label="Autres volets" className="mr-1.5 ml-auto"><Chev className="text-[#4c4c4c]" /></button>
    </div>
  </aside>
);

const SideStrip = () => (
  <div className="flex w-8 shrink-0 items-start justify-end">
    <button className="mr-1 flex flex-col items-center gap-1">
      <Svg w={12} h={16}><path d="M0 0H9V16H0Z" fill="#c9644b" /><path d="M5 0V16M6 6H8V10H3V6Z" stroke="#fff" /><path d="M9 5H11.5V11H9" stroke="#6e6e6e" /></Svg>
      <span className="text-[11px] leading-3 text-[#4c4c4c] [writing-mode:vertical-rl]">Géotraitement</span>
    </button>
    <span className="h-24 w-1.5 bg-[#c2c3c5]" />
  </div>
);

/* ---------- guest taskbar ---------- */

const WIN_APPS: { n: string; icon: React.ReactNode; active?: boolean; line?: boolean }[] = [
  { n: 'Edge', icon: <><path d="M24 12A12 12 0 1 0 15 23.5C10 22 8 16 13 14 15 18 24 18 24 12Z" fill="#1b86d8" /><path d="M1 9C5-3 24-1 24 11 24 16 15 17 15 13 16 9 8 5 1 9Z" fill="#43cf8e" /><path d="M0 12C1 7 9 5 12 9 8 11 8 20 15 23.5 6 25 0 19 0 12Z" fill="#1569b3" /></> },
  { n: 'Explorateur', line: true, icon: <><path d="M2 3H10L12 6H22V20H2Z" fill="#e8a91c" /><path d="M2 8H22V21H2Z" fill="#fcd25a" /><path d="M6 21V13H18V21H14.5V17H9.5V21Z" fill="#2b93de" /></> },
  { n: 'Store', icon: <><path d="M8 5V1.5H16V5" stroke="#23b3e8" strokeWidth="2" /><rect x="1" y="5" width="22" height="18" rx="2" fill="#f2f2f2" /><path d="M8 10H11.5V13.5H8Z" fill="#f25022" /><path d="M12.5 10H16V13.5H12.5Z" fill="#7fba00" /><path d="M8 14.5H11.5V18H8Z" fill="#00a4ef" /><path d="M12.5 14.5H16V18H12.5Z" fill="#ffb900" /></> },
  { n: 'Outlook', icon: <><path d="M6 4 16 1 24 8V22H6Z" fill="#1b86d8" /><path d="M6 16 24 9V21C24 23 22 23 20 23H8C6 23 6 22 6 20Z" fill="#35c2f1" /><rect x="0" y="6" width="13" height="12" rx="1.5" fill="#0a5ca8" /><circle cx="6.5" cy="12" r="3" stroke="#fff" strokeWidth="1.8" /></> },
  { n: 'ArcGIS Pro', active: true, line: true, icon: <><path d="M12 0 22.5 6V18L12 24 1.5 18V6Z" fill="#1f7fe8" /><circle cx="12" cy="12" r="7.2" fill="#0b4ea8" stroke="#e8f3ff" strokeWidth="1.8" /><path d="M8 7 14 6 12 9 16 11 13 17 11 13 8 11Z" fill="#e8f3ff" /></> },
  { n: 'LibreWolf', line: true, icon: <><circle cx="12" cy="12" r="11.5" fill="#0ba5f8" stroke="#fff" /><circle cx="12" cy="12" r="8.5" stroke="#fff" strokeWidth="1.5" /><path d="M7 19C8 13 9 9 15 6L16 9C13 11 14 15 12 20Z" fill="#fff" /></> },
];

const Taskbar = () => (
  <div className="flex h-10 items-stretch bg-[linear-gradient(90deg,#000_0%,#080704_28%,#0b0804_50%,#1c0302_62%,#220302_75%,#100202_80%,#060905_81%,#040504_100%)] text-white">
    <button aria-label="Démarrer" className="flex w-[43px] items-center justify-center pr-1.5"><Svg w={16} h={16}><path d="M0 2 7 1V7.5H0ZM8 .9 16 0V7.5H8ZM0 8.5H7V15L0 14ZM8 8.5H16V16L8 15.1Z" fill="#fff" /></Svg></button>
    <label className="flex w-[288px] items-center gap-3 bg-[#f1f1f1] pr-1.5 pl-3 text-[#2b2b2b]">
      <Lens s={16} />
      <input aria-label="Taper ici pour rechercher" placeholder="Taper ici pour rechercher" className="w-0 flex-1 bg-transparent text-[14px] outline-none placeholder:text-[#2b2b2b]" />
      <Svg w={64} h={36}>
        <path d="M12 4C14 2 20 1 22 3L24 14C26 18 25 21 22 23L5 29C2 28 2 25 4 22L11 14Z" fill="#dcdcf2" stroke="#55557f" /><path d="M13 8H22M13 12H23M11 16H20" stroke="#55557f" /><path d="M6 29V33M22 23V28M1 34 27 26" stroke="#777a9c" strokeWidth="1.5" />
        <path d="M30 3 34 30" stroke="#7a8099" strokeWidth="1.5" /><path d="M28 1H33L34 9H29Z" fill="#2d3050" />
        <path d="M43 2C38 8 39 34 41 36H45C44 22 46 6 43 2ZM50 2C47 10 46 30 46 35H50C52 22 53 8 50 2Z" fill="#8fb6dc" stroke="#4d6f99" strokeWidth=".7" /><path d="M40 26H45V29H40ZM46 26H51V29H46Z" fill="#f0945b" />
        <path d="M61 6 55 30" stroke="#8085a0" strokeWidth="1.5" /><path d="M58 4 63 3 62 10 58 12Z" fill="#2d3050" />
      </Svg>
    </label>
    <button aria-label="Vue des tâches" className="flex w-[50px] items-center justify-center pr-1"><Svg w={18} h={16}><path d="M1 1H11M1 15H11M2 4H11V12H2ZM15 1V4M15 8V15" stroke="#fff" strokeWidth="1.2" /><path d="M13.5 5H16.5V7.5H13.5Z" fill="#fff" /></Svg></button>
    {WIN_APPS.map((a) => (
      <button key={a.n} aria-label={a.n} className={`flex w-[49px] flex-col items-center ${a.active ? 'bg-[#343434]' : ''}`}>
        <span className="flex flex-1 items-center"><Svg w={24} h={24}>{a.icon}</Svg></span>
        <span className={`h-0.5 ${a.line ? 'bg-[#76b9ed]' : ''} ${a.active ? 'w-full' : 'w-10'}`} />
      </button>
    ))}
    <div className="ml-auto flex items-center pr-1 text-[12px]">
      <Svg w={26} h={24}><path d="M17 2A10 10 0 1 1 5 18C14 19 19 11 17 2Z" fill="#f6ad3c" /><path d="M3 12A3.5 3.5 0 0 1 3 6 4.5 4.5 0 0 1 11 5 3.5 3.5 0 0 1 13 12Z" fill="#b6cbf2" /><path d="M13 23A3 3 0 0 1 13 17 4.5 4.5 0 0 1 21 17 3 3 0 0 1 23 23Z" fill="#a9c2ef" /></Svg>
      <span className="ml-2 w-[38px]">11°C</span><span className="w-[84px]">Parc. nublad</span>
      <ChevronUp size={18} strokeWidth={1.5} className="mr-2" />
      <Svg w={14} h={18} className="mr-2"><path d="M3 4V2H11V4M3 15V17H11V15M2 6H9V13H2ZM9 8 12 6V13L9 11" stroke="#fff" /></Svg>
      <Svg w={18} h={16} className="mr-2"><path d="M4 3H17V12H4M7 15H14M10.5 12V15M1 1H5V5H1ZM3 5V14" stroke="#fff" /></Svg>
      <Svg w={18} h={16} className="mr-2"><path d="M1 6H3.5L7 3V13L3.5 10H1ZM9 6C10 7 10 9 9 10M11.5 4C13.5 6 13.5 10 11.5 12M14 2C17 5 17 11 14 14" stroke="#fff" /></Svg>
      <div className="w-[60px] text-center text-[11px] leading-[17px]"><div>22:10</div><div>11/03/2025</div></div>
      <button aria-label="Centre de notifications" className="ml-4 flex">
        <Svg w={28} h={28}><path d="M1 3H17V16H9L6 19V16H1Z" fill="#fff" /><path d="M4 7H14M4 10H14M4 13H14" stroke="#111" /><circle cx="17" cy="18" r="7.5" fill="#333" stroke="#888" /><text x="17" y="22" textAnchor="middle" fontSize="11" fill="#fff">3</text></Svg>
      </button>
      <span className="ml-2 h-10 w-px bg-[#555]" />
    </div>
  </div>
);

const VBOX: React.ReactNode[] = [
  <><rect x="1" y="1" width="12" height="14" rx="1" fill="#2b87e0" stroke="#bfe3ff" /><circle cx="7" cy="7" r="3.5" fill="#fff" /><circle cx="7" cy="7" r="1.2" fill="#2b87e0" /></>,
  <><path d="M2 3H4V13H2ZM5 4 9 1V15L5 12Z" fill="#55c1f5" /><path d="M10 5H14V14H10Z" fill="#555" /></>,
  <><rect x="5" y="1" width="9" height="7" fill="#2b5fb8" stroke="#dbe8ff" /><rect x="1" y="6" width="9" height="7" fill="#3b7fe0" stroke="#dbe8ff" /></>,
  <><path d="M1 13 9 3 13 6 5 15Z" fill="#7cc6f5" /><path d="M9 3 11 1 15 4 13 6Z" fill="#ddd" /></>,
  <path d="M1 2H6L7 4H13V14H1Z" fill="#5cc4fa" />,
  <><rect x="1" y="1" width="12" height="11" fill="#cfe2fb" /><rect x="3.5" y="3.5" width="7" height="6" fill="#1c3f96" stroke="#fff" /><path d="M4 14H10" stroke="#cfe2fb" strokeWidth="2" /></>,
  <><rect x="4" y="1" width="10" height="8" fill="#6fa4f0" /><rect x="1" y="4" width="9" height="9" fill="#2250ac" stroke="#a9c6f8" /></>,
  <><rect x="1" y="1" width="9" height="14" rx="1" fill="#3a4cae" /><path d="M3 4 5.5 11 8 4" stroke="#fff" strokeWidth="1.6" /><path d="M12.5 1V15" stroke="#e84a1e" strokeWidth="2.2" /></>,
  <><circle cx="6" cy="7" r="5.5" fill="#3b9be8" /><path d="M5 9H9V6L14 10.5 9 15V12H5Z" fill="#52c23c" /></>,
  <><rect x="1" y="1" width="13" height="13" rx="1.5" fill="#37a5e8" stroke="#9edcff" /><path d="M7.5 3V10M4.5 7.5 7.5 11 10.5 7.5" stroke="#0a2b50" strokeWidth="2.2" /></>,
];

const VBoxStatus = () => (
  <div className="flex h-[23px] items-center justify-end bg-[#303030] text-[15px] text-[#dedede]">
    <div className="mr-[5px] flex gap-1">{VBOX.map((v, i) => <Svg key={i} w={15} h={16}>{v}</Svg>)}</div>
    Right Ctrl
    <Svg w={12} h={12} className="ml-3 self-end"><path d="M8 2H10M4 6H6M8 6H10M0 10H2M4 10H6M8 10H10" stroke="#888" strokeWidth="2" /></Svg>
  </div>
);

/* ---------- host dock ---------- */

const DOCK: { n: string; icon: React.ReactNode; on?: boolean }[] = [
  { n: 'M', icon: <><rect width="36" height="36" rx="2" fill="#0d2d50" /><path d="M0 0H36V16H0Z" fill="#174a80" /><path d="M5 31V5H12L18 15 24 5H31V31H25V16L18 27 11 16V31Z" fill="#fbc91b" /></> },
  { n: 'LibreWolf', icon: <><circle cx="18" cy="18" r="18" fill="#07a6ff" /><circle cx="18" cy="18" r="13.5" stroke="#fff" strokeWidth="2" /><path d="M10 29C11 21 12 15 21 9L22 12 25 14C26 17 22 18 21 21 21 25 19 28 18 31Z" fill="#fff" /></> },
  { n: 'Tor', icon: <><circle cx="18" cy="18" r="18" fill="#6a1fa8" /><path d="M18 4A14 14 0 0 1 18 32M18 9A9 9 0 0 1 18 27M18 14A4 4 0 0 1 18 22" stroke="#f1dcff" strokeWidth="2" /></> },
  { n: 'Fichiers', icon: <><path d="M1 6Q1 3 4 3H14L17 7H32Q35 7 35 10V20H1Z" fill="#c43148" /><rect x="1" y="9" width="34" height="25" rx="3" fill="#a8a8a8" /><path d="M14 16H22V18H14Z" fill="#fff" /></> },
  { n: 'Writer', on: true, icon: <><path d="M4 4Q4 1 7 1H22L32 12V32Q32 35 29 35H7Q4 35 4 32Z" fill="#1277ab" /><path d="M24 1H32V10Z" fill="#0a4f77" /><path d="M9 13H16M9 17H16M9 21H27M9 25H27M9 29H22" stroke="#fff" strokeWidth="1.8" /><rect x="18" y="12" width="9" height="7" fill="#bfe5f8" /></> },
  { n: 'VirtualBox', icon: <><path d="M0 3H6L12 17V30H18V34H8V20Z" fill="#0a7795" /><path d="M8 3H18V7H14V15H34V34H20V30H30V20H14Z" fill="#0a7795" /><path d="M20 3H36V15H20ZM24.5 7V11H31.5V7Z" fill="#f08a24" fillRule="evenodd" /></> },
  { n: 'Notes', icon: <><rect x="3" y="2" width="27" height="33" rx="3" fill="#f2f0ea" /><path d="M3 9V5Q3 2 6 2H27Q30 2 30 5V9Z" fill="#3c7be0" /><path d="M7 14H26M7 18H24M7 22H20M7 26H18" stroke="#b5b5b5" strokeWidth="1.5" /><path d="M31 5 35 8 15 29 10 31 11 26Z" fill="#f5b62a" /><path d="M31 5 35 8 33 11 28 8Z" fill="#e0605a" /></> },
  { n: 'Firefox', icon: <><circle cx="18" cy="20" r="15.5" fill="#ff6a2b" /><path d="M20 5C22 8 30 9 33 17 36 27 30 35 21 36 28 30 28 20 20 14Z" fill="#ffcf3a" /><path d="M23 0C22 8 32 10 33 20 31 14 26 12 22 12Z" fill="#ffb833" /><path d="M3 8C6 8 10 9 13 12 9 14 4 18 3 22Z" fill="#ff9a2e" /><circle cx="18" cy="20" r="8" fill="#8a45e6" /><path d="M6 14C10 9 18 13 18 15S11 16 12 20 5 22 6 14Z" fill="#ff8a1f" /><path d="M6 28C12 37 26 36 31 26 28 36 20 37 14 35Z" fill="#f01f6b" /></> },
  { n: 'Corbeille', icon: <><path d="M5 4Q5 2 7 2H29Q31 2 31 4L32 34H4Z" fill="#c9c9c9" /><path d="M7 3H29L27 8H9Z" fill="#fafafa" /><path d="M13 20 17 15 20 19M23 19 25 24 20 27M16 28 11 26 13 22" stroke="#2f9a48" strokeWidth="3" /></> },
  { n: 'QGIS', icon: <><circle cx="17" cy="17" r="13" stroke="#6aa52e" strokeWidth="7" /><path d="M17 17 24 17 36 30 32 35 18 23Z" fill="#8cc63f" /><path d="M16 15 22 17 26 22 18 24Z" fill="#f3b23a" /></> },
  { n: 'VS Code', icon: <><path d="M26 2 35 6V30L26 34 24 30V6Z" fill="#2fa8ee" /><path d="M26 2V12L6 27 2 24Z" fill="#1178bd" /><path d="M26 34V24L6 9 2 12Z" fill="#1c8bd4" /></> },
  { n: 'Calc', icon: <><path d="M4 4Q4 1 7 1H22L32 12V32Q32 35 29 35H7Q4 35 4 32Z" fill="#24841f" /><path d="M24 1H32V10Z" fill="#11540f" /><path d="M9 13H27V27H9ZM9 17.5H27M9 22H27M15 13V27M21 13V27" stroke="#e6f7e2" strokeWidth="1.5" /><path d="M20 22H29V31H20Z" fill="#e6f7e2" /><path d="M22 29V26M24.5 29V24M27 29V27" stroke="#24841f" strokeWidth="1.5" /></> },
  { n: 'Terminal', icon: <><rect x="1" y="4" width="34" height="28" rx="3" fill="#4a4a4a" stroke="#5c5c5c" /><path d="M6 9 10 12 6 15M12 16H17" stroke="#fff" strokeWidth="1.6" /></> },
  { n: 'Visionneuse', icon: <><rect x="1" y="4" width="34" height="28" rx="3" fill="#e3e0d6" /><path d="M2 24 34 20V30H2Z" fill="#b5b0a2" /><circle cx="16" cy="16" r="9" fill="#f6f6f6" stroke="#3c3c3c" strokeWidth="2.5" /><path d="M22 23 29 31" stroke="#3c3c3c" strokeWidth="3" /></> },
  { n: 'Pipette', icon: <><path d="M33 2C30 1 27 4 25 9L22 8 20 11 27 16 29 13 27 11C31 8 35 5 33 2Z" fill="#3c4454" /><path d="M21 12 25 15 14 28 11 28 12 25Z" fill="#4d5be0" stroke="#c6cdf0" /><path d="M7 28C5 31 4 33 6 34S9 32 7 28Z" fill="#2db4f0" /></> },
];

const Dock = () => (
  <footer className="flex h-12 items-stretch bg-[#131313] text-[#dedede]">
    <div className="flex-[824_1_0%]" />
    <div className="flex w-[906px] shrink-0 flex-col">
      <div className="flex flex-1 items-center">
        <button aria-label="Menu" className="mr-1 flex h-[42px] w-[62px] shrink-0 items-center justify-center rounded-full bg-[#4d4d4d]">
          <Svg w={38} h={38}>
            <circle cx="19" cy="19" r="18" fill="#141414" stroke="#000" strokeWidth="2" />
            <path d="M19 3C25 3 24 9 25 14 29 20 30 27 27 33H11C8 27 9 20 13 14 14 9 13 3 19 3Z" fill="#2d2d2d" />
            <path d="M15 15H23C27 22 26 33 24 34H14C12 33 11 22 15 15Z" fill="#ececec" />
            <circle cx="17" cy="9" r="1.8" fill="#fff" /><circle cx="21" cy="9" r="1.8" fill="#fff" />
            <path d="M15 12 19 10.5 23 12 19 15.5Z" fill="#f7b51a" />
            <path d="M10 33 15 31 17 36H11ZM28 33 23 31 21 36H27Z" fill="#f7b51a" />
          </Svg>
        </button>
        {DOCK.map((d) => (
          <button key={d.n} aria-label={d.n} className={`flex h-[45px] w-14 shrink-0 items-center justify-center pt-0.5 ${d.on ? 'bg-[#474747]' : ''}`}>
            <Svg w={36} h={36}>{d.icon}</Svg>
          </button>
        ))}
      </div>
      <div className="ml-[66px] flex h-[3px] gap-1">
        <i className="w-[250px] bg-[#f2f2f2]" /><i className="w-[276px] bg-[#f2f2f2]" /><i className="w-[52px] bg-[#f2f2f2]" /><i className="w-[108px] bg-[#f2f2f2]" /><i className="w-[138px] bg-[#f2f2f2]" />
      </div>
    </div>
    <div className="flex flex-[820_1_0%] items-center justify-end text-[15px]">
      <Svg w={16} h={16} className="mr-3"><rect width="16" height="16" rx="3" fill="#f2f2f2" /><path d="M13 2C6 4 6 7 9 14M14 6C11 7 10 9 12 13M3 9 7 12" stroke="#131313" strokeWidth="1.5" /></Svg>
      <span className="mr-3 w-[34px]">41°C</span>
      <Svg w={15} h={16} className="mr-3"><path d="M12 5A5 5 0 1 0 12 12M12 1V6H7" stroke="#6fa0d8" strokeWidth="3" /></Svg>
      <Svg w={16} h={18} className="mr-[18px]"><path d="M0 0H16V18H0Z" fill="#000" /><path d="M5 8V5A3 3 0 0 1 11 5V8" stroke="#45b04a" strokeWidth="2" /><rect x="3" y="8" width="10" height="8" fill="#45b04a" /></Svg>
      <Svg w={16} h={16} className="mr-5"><path d="M1 5C5 1 11 1 15 5L8 14Z" stroke="#dedede" strokeWidth="1.2" /><path d="M4 8H12L8 13Z" fill="#dedede" /></Svg>
      <Svg w={17} h={16} className="mr-[18px]"><path d="M1 5H4L8 2V14L4 11H1Z" fill="#f2f2f2" /><path d="M10 5C12 6 12 10 10 11" stroke="#dedede" strokeWidth="1.3" /><path d="M12 3C15 5 15 11 12 13" stroke="#777" strokeWidth="1.3" /></Svg>
      <Svg w={16} h={16} className="mr-8"><path d="M5 3A6 6 0 1 0 11 3M8 1V8" stroke="#dedede" strokeWidth="1.3" /></Svg>
      <div className="w-[70px] text-center text-[13px] leading-[17px]"><div>03/11/25</div><div>22 : 10 PM</div></div>
      <span className="mr-[5px] ml-3.5 h-full w-px bg-[#333]" />
    </div>
  </footer>
);

export default function App() {
  return (
    <div className="flex min-h-screen flex-col bg-[#edeef0] font-['Open_Sans','Noto_Sans',sans-serif]">
      <nav className="flex h-7 items-center gap-4 border-t-4 border-b border-t-[#2a2a2a] border-b-[#222] bg-[#303030] pl-[5px] text-[14px] text-[#dedede]">
        {['File', 'Machine', 'View', 'Input', 'Devices', 'Help'].map((m) => <button key={m}>{m}</button>)}
      </nav>
      <TitleBar />
      <Tabs />
      <Ribbon />
      <div className="mt-[7px] mb-1.5 flex flex-1">
        <Contents />
        <MapPane />
        <ElementPane />
        <SideStrip />
      </div>
      <Taskbar />
      <VBoxStatus />
      <Dock />
    </div>
  );
}
